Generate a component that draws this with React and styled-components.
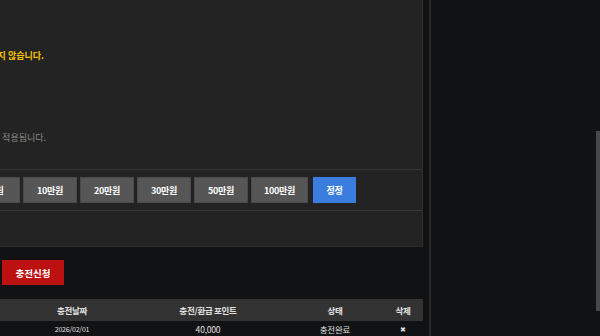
import React from 'react';
import styled, { createGlobalStyle } from "styled-components";

const GlobalStyle = createGlobalStyle`
    html, body {
        margin: 0;
        padding: 0;
        background-color: #111214;
        overflow: hidden;
    }
    body {
        font-family: "Noto Sans CJK KR", "Noto Sans", sans-serif;
    }
`;

const Page = styled.div`
    width: 600px;
    height: 336px;
    display: flex;
    overflow: hidden;
`;

const Main = styled.div`
    width: 429px;
    flex-shrink: 0;
    overflow: hidden;
`;

const Panel = styled.div`
    margin-left: -160px;
    width: 583px;
    height: 247px;
    box-sizing: border-box;
    background-color: #232323;
    border-right: 1px solid #2f2f2f;
    border-bottom: 1px solid #2f2f2f;
    display: flex;
    flex-direction: column;
`;

const InfoArea = styled.div`
    height: 170px;
    box-sizing: border-box;
    border-bottom: 1px solid #363636;
    display: flex;
    flex-direction: column;
`;

const NoticeRow = styled.div`
    width: ${props => props.edge}px;
    margin-top: ${props => props.top}px;
    display: flex;
    justify-content: flex-end;
    white-space: nowrap;
    font-size: 9px;
    line-height: 12px;
    font-weight: ${props => props.warn ? 700 : 400};
    color: ${props => props.warn ? "#f2c200" : "#8a8a8a"};
`;

const AmountRow = styled.div`
    height: 41px;
    box-sizing: border-box;
    border-bottom: 1px solid #363636;
    padding: 7px 0 0 12px;
    display: flex;
    gap: 3px;
`;

const AmountButton = styled.button`
    width: ${props => props.w || 54}px;
    height: 26px;
    margin-left: ${props => props.push || 0}px;
    padding: 0;
    box-sizing: border-box;
    border: 1px solid ${props => props.blue ? "#3a7ddf" : "#4a4a4a"};
    background-color: ${props => props.blue ? "#3a7ddf" : "#565656"};
    color: #ffffff;
    font-family: inherit;
    font-size: 9px;
    font-weight: 700;
    letter-spacing: -0.3px;
    cursor: pointer;
`;

const BlankArea = styled.div`
    flex: 1;
`;

const SubmitButton = styled.button`
    display: block;
    margin: 13px 0 0 2px;
    width: 62px;
    height: 25px;
    padding: 0;
    border: none;
    background-color: #bd1010;
    color: #ffffff;
    font-family: inherit;
    font-size: 9.5px;
    font-weight: 700;
    cursor: pointer;
`;

const Table = styled.div`
    margin: 14px 0 0 -85px;
    width: 508px;
    display: grid;
    grid-template-columns: 100px 114px 158px 96px 40px;
`;

const HeadCell = styled.div`
    height: 22px;
    background-color: #333333;
    display: flex;
    align-items: center;
    justify-content: center;
    font-size: 8.5px;
    font-weight: 700;
    color: #e2e2e2;
    letter-spacing: -0.3px;
`;

const Cell = styled.div`
    height: 16px;
    display: flex;
    align-items: center;
    justify-content: center;
    font-size: ${props => props.small ? 7 : 8.5}px;
    color: #e0e0e0;
    letter-spacing: -0.2px;
`;

const Sidebar = styled.div`
    flex: 1;
    border-left: 2px solid #28282a;
    background-color: #111214;
    display: flex;
    justify-content: flex-end;
`;

const ScrollThumb = styled.div`
    width: 4px;
    height: 180px;
    margin-top: 131px;
    background-color: #48484c;
`;

const amounts = [
    { label: "1만원" },
    { label: "3만원" },
    { label: "5만원" },
    { label: "10만원" },
    { label: "20만원" },
    { label: "30만원" },
    { label: "50만원" },
    { label: "100만원", w: 57 },
];

function App() {
    return (
        <Page>
            <GlobalStyle />
            <Main>
                <Panel>
                    <InfoArea>
                        <NoticeRow warn edge={204} top={50}>
                            ※ 입금자명과 회원님의 예금주명이 다를 경우 충전이 되지 않습니다.
                        </NoticeRow>
                        <NoticeRow edge={206} top={70}>
                            ※ 보너스 포인트는 충전 완료 후 적용됩니다.
                        </NoticeRow>
                    </InfoArea>
                    <AmountRow>
                        {amounts.map((a) => (
                            <AmountButton key={a.label} w={a.w}>{a.label}</AmountButton>
                        ))}
                        <AmountButton blue w={43} push={2}>정정</AmountButton>
                    </AmountRow>
                    <BlankArea />
                </Panel>
                <SubmitButton>충전신청</SubmitButton>
                <Table>
                    <HeadCell>번호</HeadCell>
                    <HeadCell>충전날짜</HeadCell>
                    <HeadCell>충전/환급 포인트</HeadCell>
                    <HeadCell>상태</HeadCell>
                    <HeadCell>삭제</HeadCell>
                    <Cell>1</Cell>
                    <Cell small>2026/02/01</Cell>
                    <Cell>40,000</Cell>
                    <Cell>충전완료</Cell>
                    <Cell small>✖</Cell>
                </Table>
            </Main>
            <Sidebar>
                <ScrollThumb />
            </Sidebar>
        </Page>
    );
}

export default App;
